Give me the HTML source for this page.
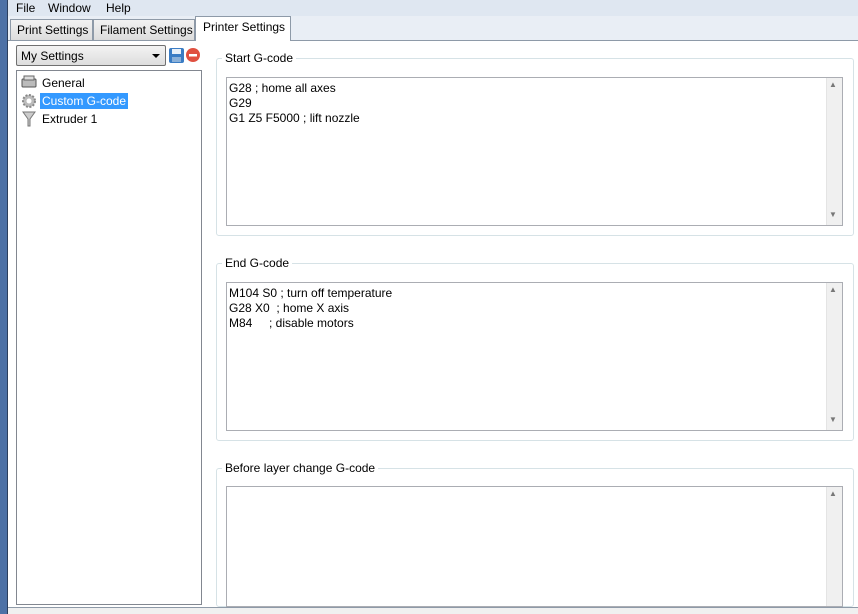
<!DOCTYPE html>
<html style="overflow:hidden;width:858px;height:614px"><head><style>
*{margin:0;padding:0;box-sizing:border-box}
body{width:858px;height:614px;overflow:hidden;background:#fff;font-family:"Liberation Sans",sans-serif;font-size:12px;color:#000;position:relative;white-space:nowrap}
.a{position:absolute}
.menu{left:8px;top:0;width:850px;height:16px;background:#dfe7f1}
.menu span{position:absolute;top:1px}
.tabrow{left:8px;top:16px;width:850px;height:24px;background:#e9eef5}
.tab{position:absolute;top:19px;height:21px;border:1px solid #8e9aa8;border-bottom:none;background:linear-gradient(#f2f2f2,#dcdcdc);padding:3px 0 0 6px}
.gb{border:1px solid #d6e2e6;border-radius:3px}
.lbl{background:#fff;padding:0 3px}
.ta{border:1px solid #abadb3;background:#fff;padding:3px 2px;line-height:15px}
.sb{position:absolute;right:0;top:0;bottom:0;width:16px;background:#f0f0f0;border-left:1px solid #e4e4e4}
</style></head><body>
<div class="a" style="left:0;top:0;width:8px;height:614px;background:#4d71a6;border-right:1px solid #2c3f5e"></div>
<div class="a menu"><span style="left:8px">File</span><span style="left:40px">Window</span><span style="left:98px">Help</span></div>
<div class="a tabrow"></div>
<div class="a tab" style="left:10px;width:83px">Print Settings</div>
<div class="a tab" style="left:93px;width:102px">Filament Settings</div>
<div class="a" style="left:195px;top:16px;width:96px;height:25px;border:1px solid #8e9aa8;border-bottom:none;background:#fff;padding:3px 0 0 7px">Printer Settings</div>
<div class="a" style="left:8px;top:40px;width:850px;height:1px;background:#8e9aa8"></div>
<div class="a" style="left:196px;top:40px;width:94px;height:1px;background:#fff"></div>
<div class="a" style="left:16px;top:45px;width:150px;height:21px;border:1px solid #707070;border-radius:2px;background:linear-gradient(#f3f3f3,#dddddd);padding:3px 0 0 4px">My Settings<span class="a" style="right:5px;top:8px;border:4px solid transparent;border-top:4px solid #000;border-bottom:none"></span></div>
<svg class="a" style="left:168px;top:47px" width="34" height="17"><rect x="1" y="1" width="15" height="15" rx="2" fill="#3a7cc4"/><rect x="4" y="2" width="9" height="5" fill="#e8f0f8"/><rect x="4" y="10" width="9" height="5" fill="#8ab0d8"/><circle cx="25" cy="8" r="7" fill="#e05040"/><rect x="21" y="7" width="8" height="2.5" fill="#fff"/></svg>
<div class="a" style="left:16px;top:70px;width:186px;height:535px;border:1px solid #828790;background:#fff"></div>
<svg class="a" style="left:21px;top:75px" width="16" height="14"><rect x="1" y="4" width="14" height="8" rx="1" fill="#bbb" stroke="#555"/><rect x="3" y="1" width="10" height="4" fill="#ddd" stroke="#666"/></svg>
<div class="a" style="left:42px;top:76px">General</div>
<svg class="a" style="left:21px;top:93px" width="16" height="16"><circle cx="8" cy="8" r="6" fill="#bbb" stroke="#888" stroke-width="2" stroke-dasharray="2 1.5"/><circle cx="8" cy="8" r="2.5" fill="#fff"/></svg>
<div class="a" style="left:40px;top:93px;width:88px;height:16px;background:#3399ff;color:#fff;padding:1px 2px;overflow:visible">Custom G-code</div>
<svg class="a" style="left:22px;top:111px" width="14" height="16"><path d="M1 1 H13 L8 8 V15 H6 V8 Z" fill="#ccc" stroke="#777"/></svg>
<div class="a" style="left:42px;top:112px">Extruder 1</div>

<div class="a gb" style="left:216px;top:58px;width:638px;height:178px"></div>
<div class="a lbl" style="left:222px;top:51px">Start G-code</div>
<div class="a ta" style="left:226px;top:77px;width:617px;height:149px">G28 ; home all axes<br>G29<br>G1 Z5 F5000 ; lift nozzle<div class="sb"></div></div>

<div class="a gb" style="left:216px;top:263px;width:638px;height:178px"></div>
<div class="a lbl" style="left:222px;top:256px">End G-code</div>
<div class="a ta" style="left:226px;top:282px;width:617px;height:149px">M104 S0 ; turn off temperature<br>G28 X0&nbsp; ; home X axis<br>M84&nbsp;&nbsp;&nbsp;&nbsp; ; disable motors<div class="sb"></div></div>

<div class="a gb" style="left:216px;top:468px;width:638px;height:139px"></div>
<div class="a lbl" style="left:222px;top:461px">Before layer change G-code</div>
<div class="a ta" style="left:226px;top:486px;width:617px;height:121px"><div class="sb"></div></div>
<div class="a" style="left:829px;top:80px;font-size:8px;color:#777">▲</div>
<div class="a" style="left:829px;top:210px;font-size:8px;color:#777">▼</div>
<div class="a" style="left:829px;top:285px;font-size:8px;color:#777">▲</div>
<div class="a" style="left:829px;top:415px;font-size:8px;color:#777">▼</div>
<div class="a" style="left:829px;top:489px;font-size:8px;color:#777">▲</div>
<div class="a" style="left:8px;top:607px;width:850px;height:7px;background:#f0f0f0;border-top:1px solid #8e9aa8"></div>
</body></html>
